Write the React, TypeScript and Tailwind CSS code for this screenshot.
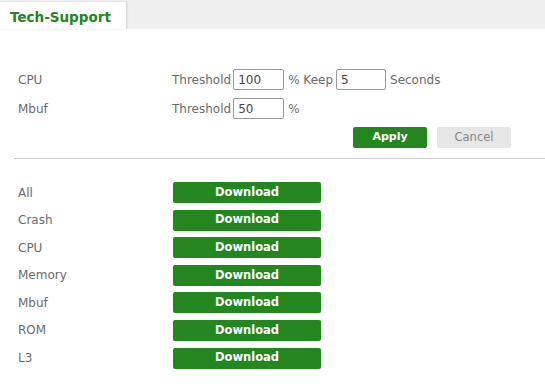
import React from 'react';

const downloads = ['All', 'Crash', 'CPU', 'Memory', 'Mbuf', 'ROM', 'L3'];

export default function App() {
    return (
        <main className="w-[545px] h-[390px] bg-white overflow-hidden text-[12px] text-[#6b6b6b] font-['DejaVu_Sans',sans-serif]">
            {/* Tab strip */}
            <div className="h-[29px] bg-[#efefef] flex items-end">
                <div className="h-[27px] w-[126px] bg-white shadow-[1px_0_2px_rgba(0,0,0,0.12)] flex items-center pl-[10px] pt-[3px]">
                    <span className="text-[13.5px] font-bold text-[#23861e]">Tech-Support</span>
                </div>
            </div>

            {/* Threshold settings */}
            <section className="pt-[40px] pl-[18px]">
                <div className="flex items-center h-[21px]">
                    <div className="w-[154px]">CPU</div>
                    <span>Threshold</span>
                    <input
                        defaultValue="100"
                        className="ml-[2px] w-[51px] h-[21px] border border-[#999] rounded-[2px] px-[4px] outline-none text-[#444]"
                    />
                    <span className="ml-[4px]">% Keep</span>
                    <input
                        defaultValue="5"
                        className="ml-[3px] w-[50px] h-[21px] border border-[#999] rounded-[2px] px-[4px] outline-none text-[#444]"
                    />
                    <span className="ml-[4px]">Seconds</span>
                </div>
                <div className="flex items-center h-[21px] mt-[8px]">
                    <div className="w-[154px]">Mbuf</div>
                    <span>Threshold</span>
                    <input
                        defaultValue="50"
                        className="ml-[2px] w-[51px] h-[21px] border border-[#999] rounded-[2px] px-[4px] outline-none text-[#444]"
                    />
                    <span className="ml-[4px]">%</span>
                </div>
            </section>

            <div className="flex gap-[10px] pl-[353px] mt-[8px]">
                <button className="w-[74px] h-[21px] bg-[#23861e] rounded-[2px] text-white font-bold text-[11px]">Apply</button>
                <button className="w-[74px] h-[21px] bg-[#e6e6e6] rounded-[2px] text-[#888] text-[11.5px]">Cancel</button>
            </div>

            <div className="ml-[14px] mt-[10px] h-px bg-[#d0d0d0]"></div>

            {/* Download list */}
            <section className="pt-[23px] pl-[18px] flex flex-col gap-[6.6px]">
                {downloads.map((name) => (
                    <div key={name} className="flex items-center h-[21px]">
                        <div className="w-[155px]">{name}</div>
                        <button className="w-[148px] h-[21px] bg-[#23861e] rounded-[2px] text-white font-bold text-[11.5px]">
                            Download
                        </button>
                    </div>
                ))}
            </section>
        </main>
    );
}
